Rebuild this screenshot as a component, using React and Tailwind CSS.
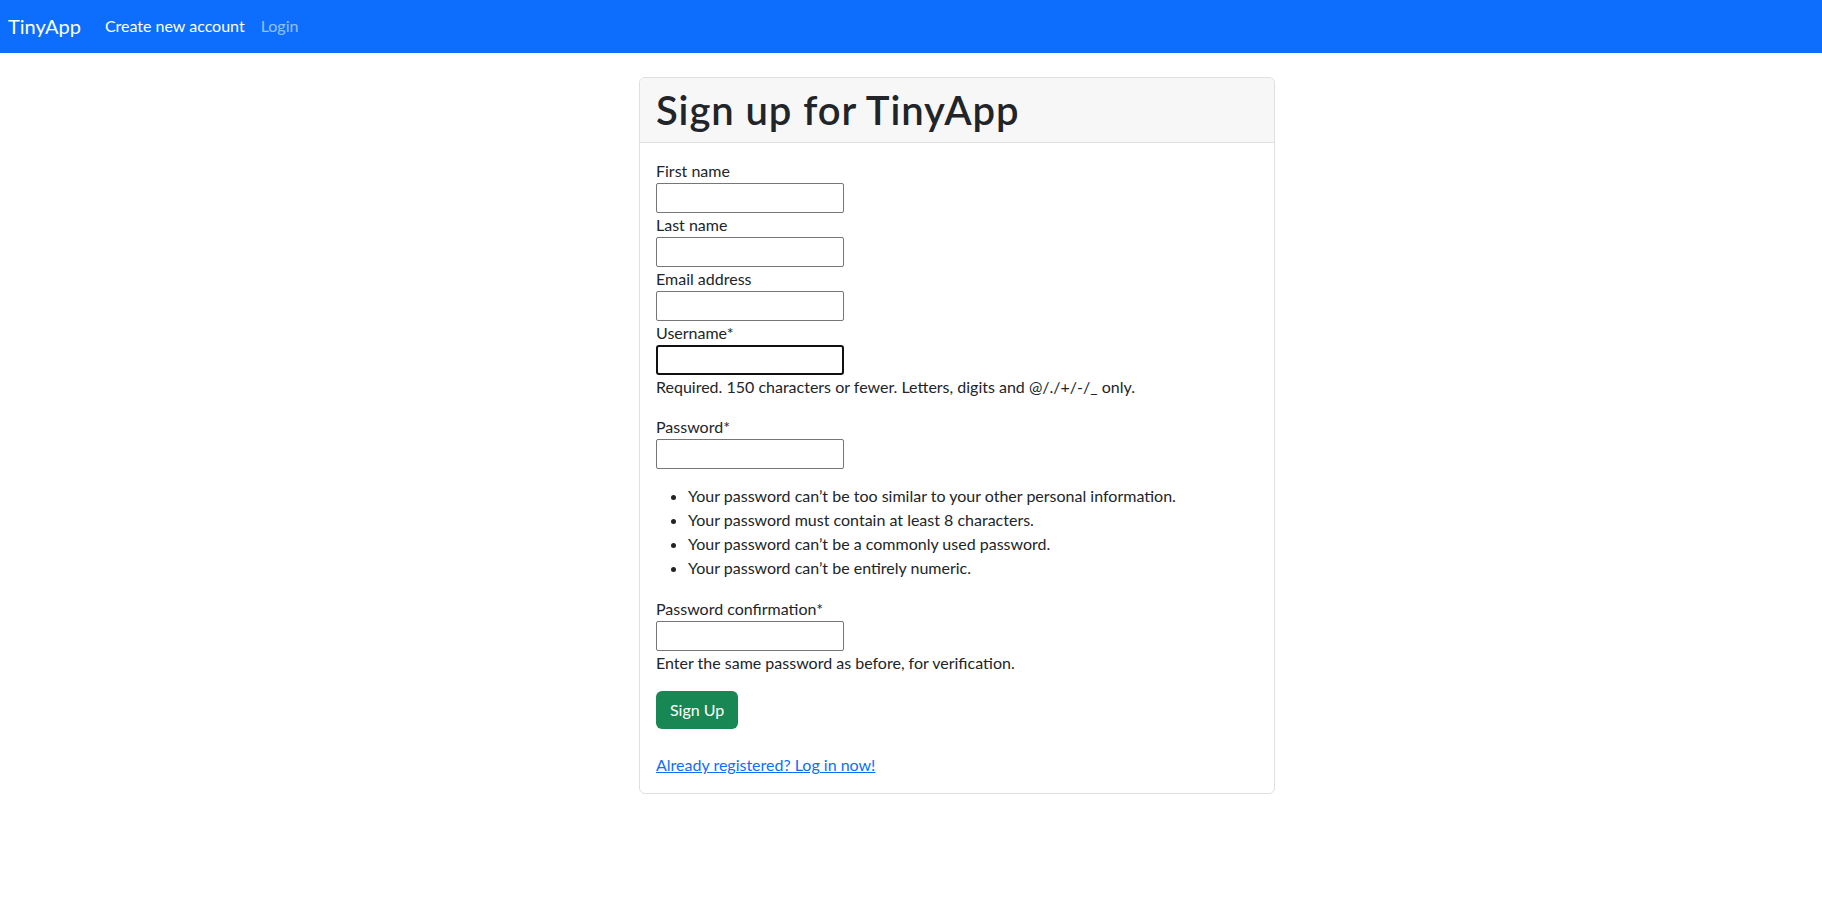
import React from 'react';

const Field = ({ label, focused }) => (
  <>
    <label className="block">{label}</label>
    <input
      type="text"
      className={
        focused
          ? 'block h-[30px] w-[188px] rounded-[3px] border-2 border-[#101010] bg-white px-[2px] outline-none'
          : 'block h-[30px] w-[188px] rounded-[2px] border border-[#767676] bg-white px-[2px] outline-none'
      }
    />
  </>
);

export default function App() {
  return (
    <div className="min-h-screen bg-white font-['Lato','Liberation_Sans',sans-serif] text-base leading-6 text-[#212529]">
      {/* navbar */}
      <nav className="flex h-[53px] items-center bg-[#0d6efd] px-2 pb-[2px]">
        <a href="#" className="mr-4 text-[20px] leading-[30px] text-white">TinyApp</a>
        <a href="#" className="px-2 text-white">Create new account</a>
        <a href="#" className="px-2 text-white/55">Login</a>
      </nav>

      {/* sign up card */}
      <div className="ml-[639px] mt-6 w-[636px] rounded-md border border-[#dfdfdf]">
        <div className="rounded-t-md border-b border-[#dfdfdf] bg-[#f7f7f7] px-4 py-2">
          <h1 className="text-[40px] font-semibold leading-[48px] tracking-[0.9px]">Sign up for TinyApp</h1>
        </div>

        <div className="p-4">
          <form>
            <Field label="First name" />
            <Field label="Last name" />
            <Field label="Email address" />
            <Field label="Username*" focused />
            <p className="mb-4">Required. 150 characters or fewer. Letters, digits and @/./+/-/_ only.</p>

            <Field label="Password*" />
            <ul className="mb-[17px] mt-[15px] list-disc pl-8">
              <li>Your password can’t be too similar to your other personal information.</li>
              <li>Your password must contain at least 8 characters.</li>
              <li>Your password can’t be a commonly used password.</li>
              <li>Your password can’t be entirely numeric.</li>
            </ul>

            <Field label="Password confirmation*" />
            <p className="mb-4">Enter the same password as before, for verification.</p>

            <button type="submit" className="h-[38px] rounded-md bg-[#198754] px-[14px] text-white">
              Sign Up
            </button>
          </form>

          <a href="#" className="mt-6 block w-fit text-[#0d6efd] underline">
            Already registered? Log in now!
          </a>
        </div>
      </div>
    </div>
  );
}
